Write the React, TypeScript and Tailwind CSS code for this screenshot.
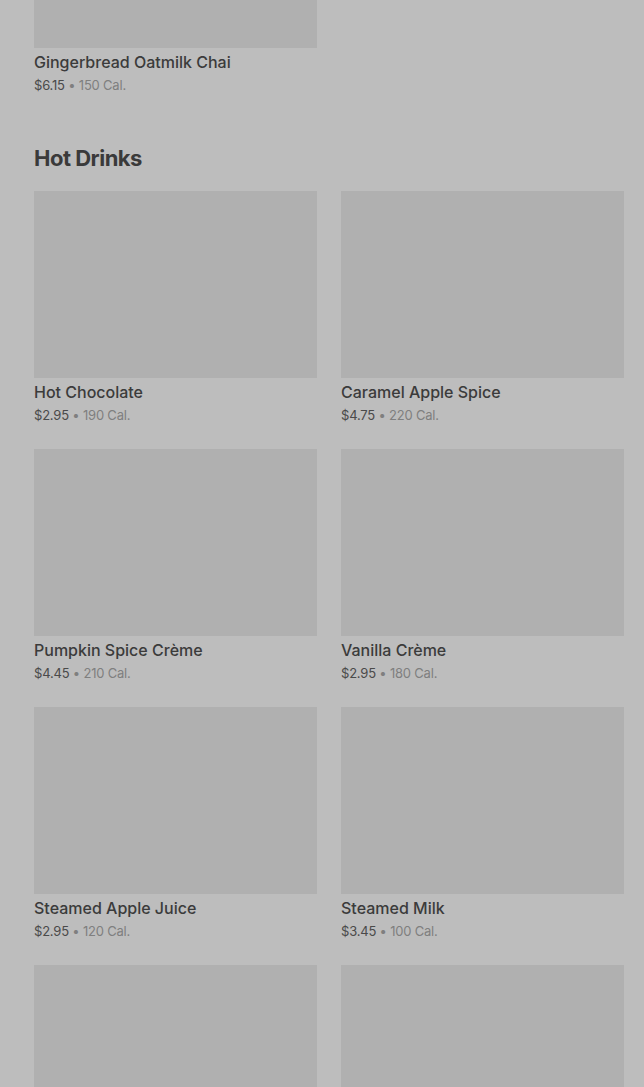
import React from "react";

type Item = { name: string; price: string; cal: string };

function Card({ item }: { item: Item }) {
  return (
    <div className="flex flex-col">
      <div className="h-[187px] bg-[#b0b0b0]" />
      <div className="mt-[4px] text-[16px] leading-[20px] font-medium text-[#3b3b3b]">{item.name}</div>
      <div className="mt-[4px] text-[13px] leading-[18px] tracking-[-0.2px] text-[#4a4a4a]">
        {item.price} <span className="text-[#7f7f7f]">• {item.cal}</span>
      </div>
    </div>
  );
}

const hot: Item[] = [
  { name: "Hot Chocolate", price: "$2.95", cal: "190 Cal." },
  { name: "Caramel Apple Spice", price: "$4.75", cal: "220 Cal." },
  { name: "Pumpkin Spice Crème", price: "$4.45", cal: "210 Cal." },
  { name: "Vanilla Crème", price: "$2.95", cal: "180 Cal." },
  { name: "Steamed Apple Juice", price: "$2.95", cal: "120 Cal." },
  { name: "Steamed Milk", price: "$3.45", cal: "100 Cal." },
];

export default function App() {
  return (
    <div
      className="h-[1087px] overflow-hidden bg-[#bdbdbd] pl-[34px] pr-[20px]"
      style={{ fontFamily: "Inter, 'Noto Sans', sans-serif" }}
    >
      <div className="-mt-[139px] grid grid-cols-2 gap-x-[24px]">
        <Card item={{ name: "Gingerbread Oatmilk Chai", price: "$6.15", cal: "150 Cal." }} />
      </div>
      <h2 className="mt-[50px] text-[22px] leading-[28px] font-bold tracking-[-0.5px] text-[#3a3a3a]">Hot Drinks</h2>
      <div className="mt-[19px] grid grid-cols-2 gap-x-[24px] gap-y-[25px]">
        {hot.map((it) => (
          <Card key={it.name} item={it} />
        ))}
        <div className="h-[187px] bg-[#b0b0b0]" />
        <div className="h-[187px] bg-[#b0b0b0]" />
      </div>
    </div>
  );
}
